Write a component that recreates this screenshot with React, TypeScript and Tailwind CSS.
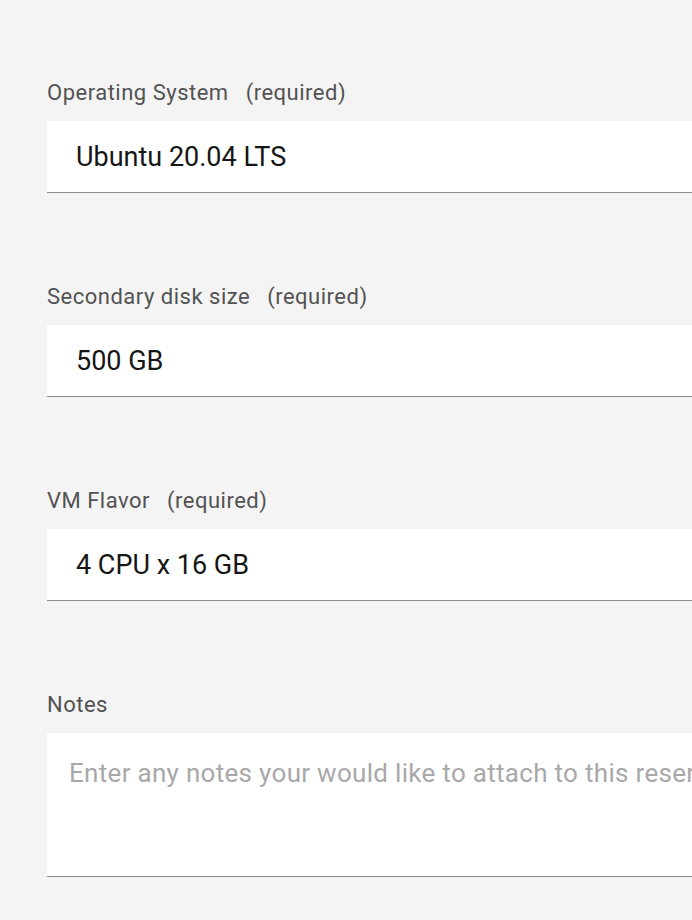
import React from "react";

const font = { fontFamily: "Roboto, 'Noto Sans', sans-serif" };

function Field({ label, value, required = true }: { label: string; value: string; required?: boolean }) {
  return (
    <div className="mb-[89px]">
      <label className="block h-[29px] mb-[14px] text-[22px] leading-[29px] tracking-[0.5px] text-[#525252]">
        {label}
        {required && <span className="ml-[17px]">(required)</span>}
      </label>
      <div className="h-[72px] w-[800px] bg-white border-b border-[#8d8d8d] flex items-center pl-[29px] pt-[2px] text-[27px] text-[#161616]">
        {value}
      </div>
    </div>
  );
}

export default function App() {
  return (
    <div className="min-h-[920px] w-[692px] overflow-hidden bg-[#f4f4f4] pt-[78px] pl-[47px]" style={font}>
      <Field label="Operating System" value="Ubuntu 20.04 LTS" />
      <Field label="Secondary disk size" value="500 GB" />
      <Field label="VM Flavor" value="4 CPU x 16 GB" />
      <div>
        <label className="block h-[29px] mb-[14px] text-[22px] leading-[29px] tracking-[0.5px] text-[#525252]">
          Notes
        </label>
        <textarea
          className="block h-[144px] w-[800px] resize-none bg-white border-b border-[#8d8d8d] pl-[22px] pt-[25px] text-[26px] leading-[30px] tracking-[0.3px] text-[#161616] placeholder:text-[#a8a8a8] outline-none"
          placeholder="Enter any notes your would like to attach to this reservation"
        />
      </div>
    </div>
  );
}
